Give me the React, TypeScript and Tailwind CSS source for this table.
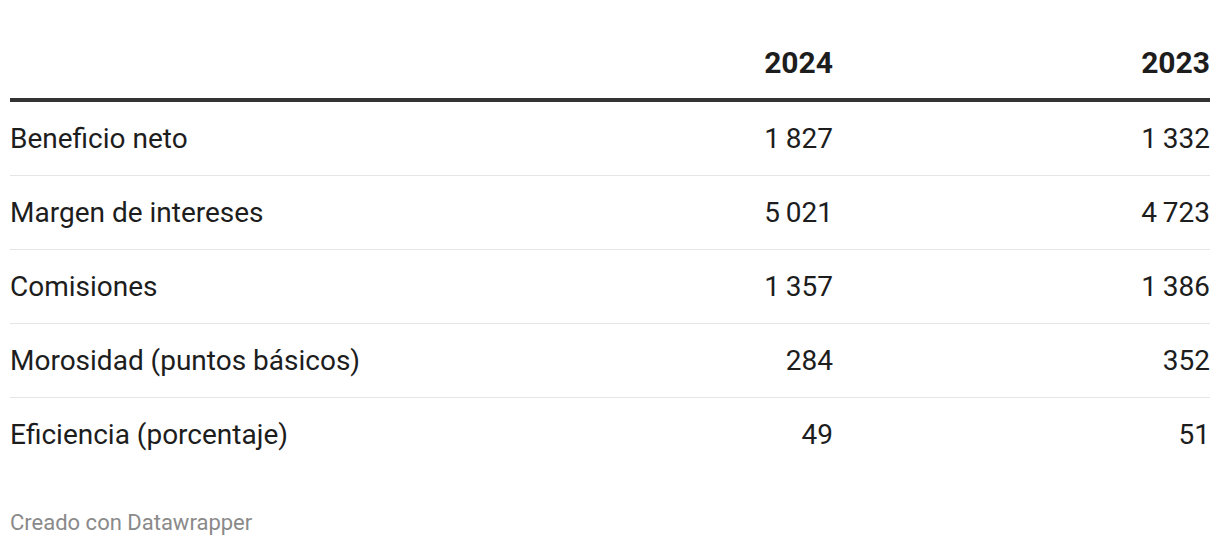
type Row = {
  label: string;
  y2024: string;
  y2023: string;
};

const rows: Row[] = [
  { label: "Beneficio neto", y2024: "1\u2009827", y2023: "1\u2009332" },
  { label: "Margen de intereses", y2024: "5\u2009021", y2023: "4\u2009723" },
  { label: "Comisiones", y2024: "1\u2009357", y2023: "1\u2009386" },
  { label: "Morosidad (puntos básicos)", y2024: "284", y2023: "352" },
  { label: "Eficiencia (porcentaje)", y2024: "49", y2023: "51" },
];

const gridCols = "grid grid-cols-[1fr_377px_377px]";

export default function App() {
  return (
    <div className="w-[1220px] h-[546px] bg-white px-[10px] font-['Roboto',sans-serif] text-[#1d1d1d]">
      <div className={`${gridCols} h-[102px] items-end pb-[18px] border-b-4 border-[#333333]`}>
        <div />
        <div className="text-right text-[30px] leading-[34px] font-bold">2024</div>
        <div className="text-right text-[30px] leading-[34px] font-bold">2023</div>
      </div>

      {rows.map((row, i) => (
        <div
          key={row.label}
          className={`${gridCols} items-center text-[28px] leading-[32px] ${
            i !== rows.length - 1 ? "h-[74px] border-b border-[#e6e6e6]" : "h-[74px]"
          }`}
        >
          <div>{row.label}</div>
          <div className="text-right tabular-nums whitespace-nowrap">{row.y2024}</div>
          <div className="text-right tabular-nums whitespace-nowrap">{row.y2023}</div>
        </div>
      ))}

      <div className="pt-[38px] text-[22px] leading-[26px] text-[#8a8a8a]">
        Creado con Datawrapper
      </div>
    </div>
  );
}
